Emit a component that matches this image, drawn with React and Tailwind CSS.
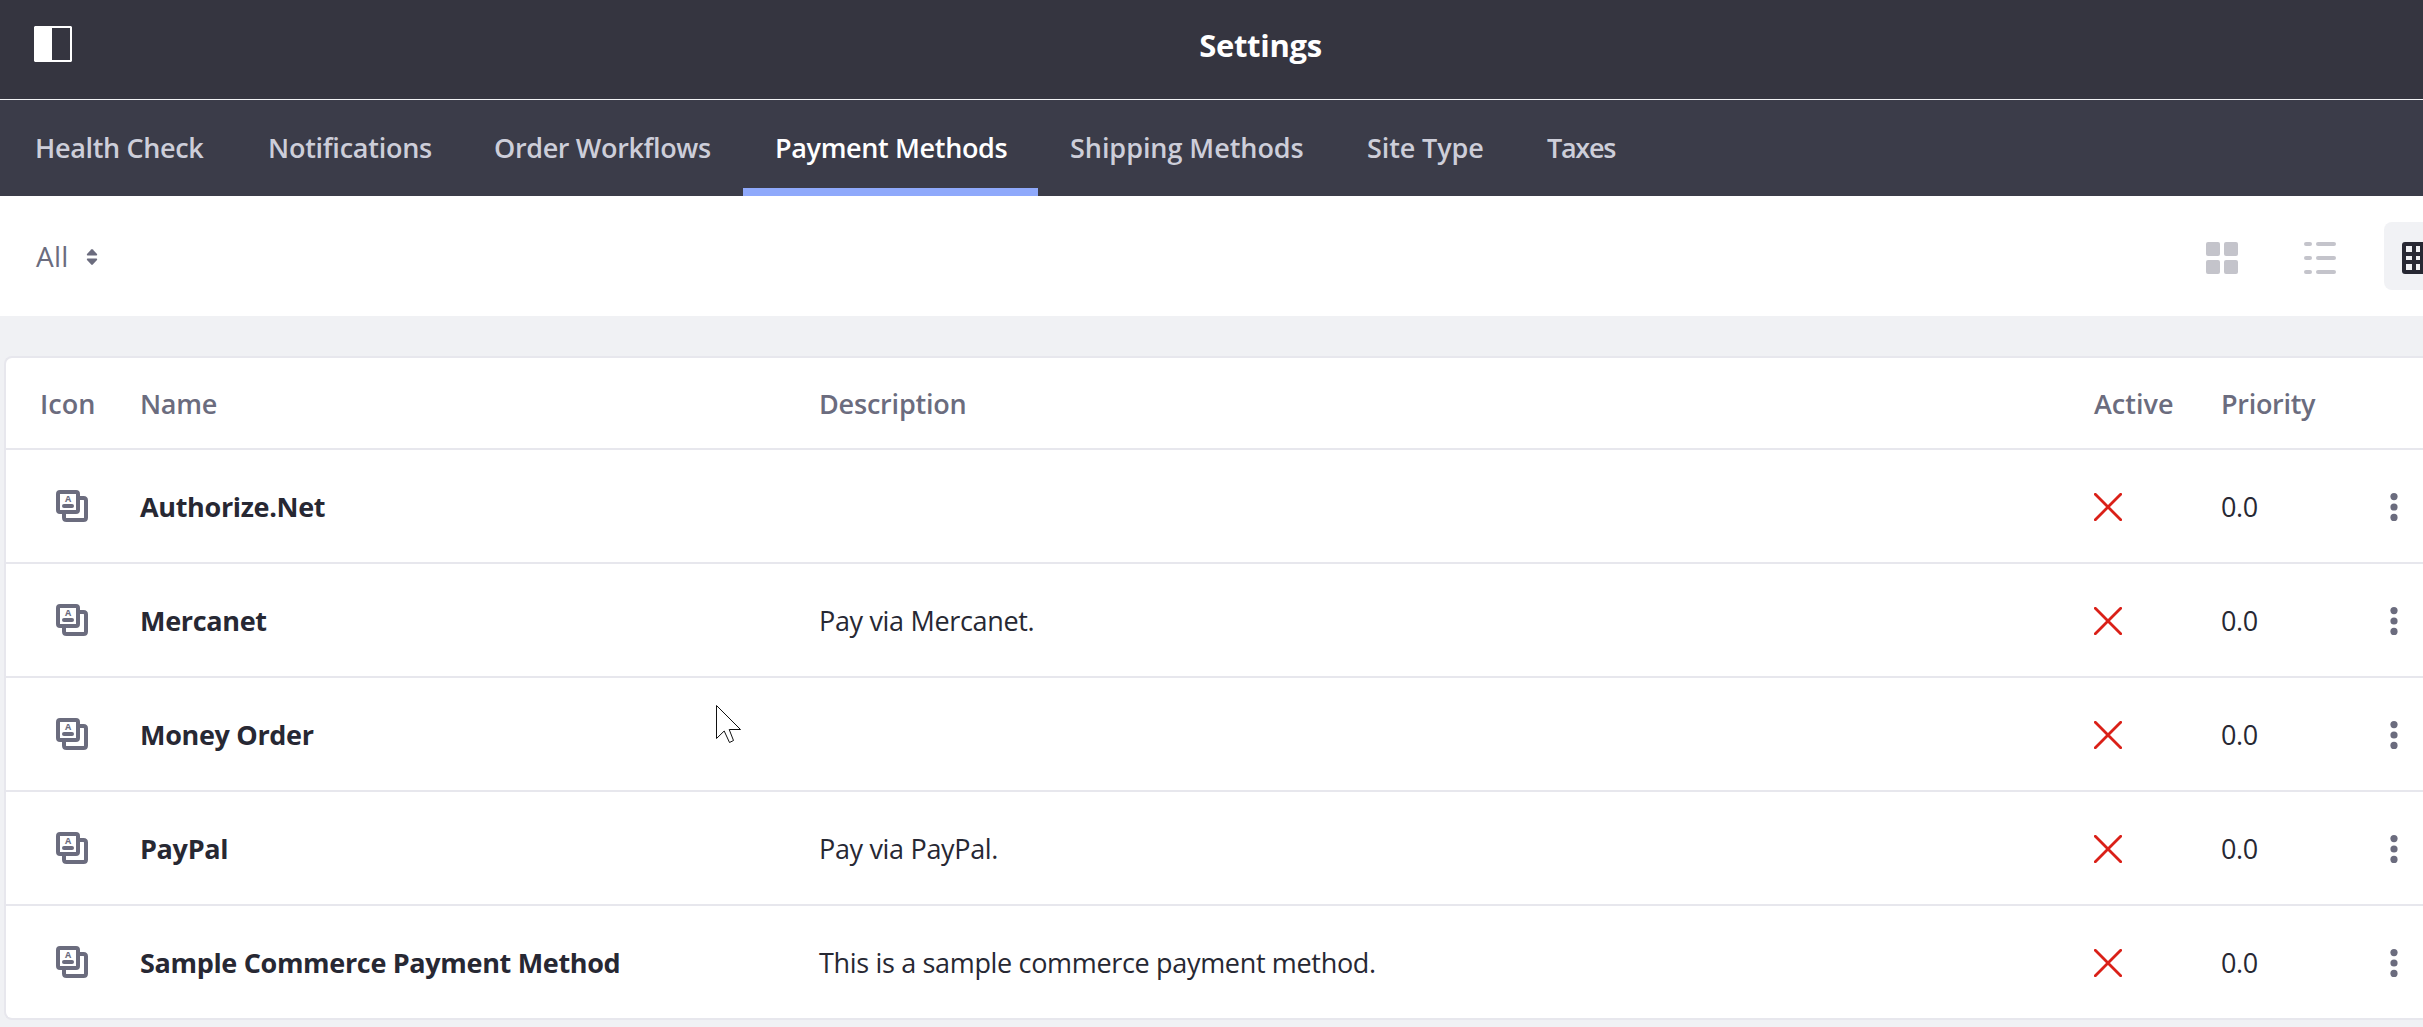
import React from "react";

const tabs = [
  { label: "Health Check", className: "w-[233px] tracking-[-0.35px] text-[#cdced9]" },
  { label: "Notifications", className: "w-[226px] tracking-[-0.25px] text-[#cdced9]" },
  { label: "Order Workflows", className: "w-[281px] tracking-[-0.35px] text-[#cdced9]" },
  { label: "Payment Methods", className: "w-[295px] tracking-[-0.35px] text-white", active: true },
  { label: "Shipping Methods", className: "w-[297px] tracking-[-0.05px] text-[#cdced9]" },
  { label: "Site Type", className: "w-[180px] tracking-[-0.1px] text-[#cdced9]" },
  { label: "Taxes", className: "w-[136px] tracking-[-1.3px] text-[#cdced9]" },
];

const methods = [
  { name: "Authorize.Net", description: "" },
  { name: "Mercanet", description: "Pay via Mercanet." },
  { name: "Money Order", description: "" },
  { name: "PayPal", description: "Pay via PayPal." },
  { name: "Sample Commerce Payment Method", description: "This is a sample commerce payment method." },
];

const columns = "grid grid-cols-[134px_679px_1275px_127px_169px_1fr] items-center";

function SidebarIcon() {
  return (
    <svg width="38" height="36" viewBox="0 0 38 36" className="shrink-0">
      <path fillRule="evenodd" fill="#fff" d="M1 0H37L38 1V35L37 36H1L0 35V1ZM18 2V34H36V2Z" />
    </svg>
  );
}

function CaretIcon() {
  return (
    <svg width="12" height="16" viewBox="0 0 12 16" fill="#6b6c7e">
      <path d="M5.2 .5Q6 -.3 6.8 .5L11 5Q11.6 6.4 10.4 6.5H1.6Q.4 6.4 1 5Z" />
      <path d="M5.2 15.5Q6 16.3 6.8 15.5L11 11Q11.6 9.6 10.4 9.5H1.6Q.4 9.6 1 11Z" />
    </svg>
  );
}

function CardsIcon() {
  return (
    <svg width="32" height="32" viewBox="0 0 32 32" fill="#c4c4cb">
      <rect width="14" height="14" rx="2" />
      <rect x="18" width="14" height="14" rx="2" />
      <rect y="18" width="14" height="14" rx="2" />
      <rect x="18" y="18" width="14" height="14" rx="2" />
    </svg>
  );
}

function ListIcon() {
  return (
    <svg width="32" height="32" viewBox="0 0 32 32" fill="#c4c4cb">
      {[0, 14, 28].map((y) => (
        <g key={y}>
          <rect y={y} width="8" height="4" rx="2" />
          <rect x="12" y={y} width="20" height="4" rx="2" />
        </g>
      ))}
    </svg>
  );
}

function TableIcon() {
  return (
    <svg width="32" height="32" viewBox="0 0 32 32" className="shrink-0">
      <rect width="32" height="32" rx="3" fill="#272833" />
      {[[4, 6], [14, 4], [22, 6]].map(([y, h]) => (
        <g key={y} fill="#f1f2f5">
          <rect x="4" y={y} width="6" height={h} />
          <rect x="14" y={y} width="4" height={h} />
          <rect x="22" y={y} width="6" height={h} />
        </g>
      ))}
    </svg>
  );
}

function MethodIcon() {
  return (
    <svg width="32" height="32" viewBox="0 0 32 32" fill="none">
      <path d="M8 23V27.5Q8 30 10.5 30H27.5Q30 30 30 27.5V10.5Q30 8 27.5 8H23" stroke="#6b6c7e" strokeWidth="4" />
      <rect x="2" y="2" width="20" height="20" rx="2" stroke="#6b6c7e" strokeWidth="4" />
      <rect x="6" y="14" width="12" height="4" rx="2" fill="#6b6c7e" />
      <text x="12" y="12.2" textAnchor="middle" fill="#6b6c7e" className="font-['Open_Sans',sans-serif] text-[9px] font-bold tracking-normal">A</text>
    </svg>
  );
}

function CrossIcon() {
  return (
    <svg width="28" height="28" viewBox="0 0 28 28" className="mt-[2px]">
      <path d="M1.3 1.3L26.7 26.7M26.7 1.3L1.3 26.7" stroke="#da2018" strokeWidth="2.8" strokeLinecap="round" />
    </svg>
  );
}

function MenuIcon() {
  return (
    <svg width="8" height="28" viewBox="0 0 8 28" fill="#6b6c7e" className="mt-[2px]">
      <circle cx="4" cy="3.6" r="3.6" />
      <circle cx="4" cy="14" r="3.6" />
      <circle cx="4" cy="24.4" r="3.6" />
    </svg>
  );
}

export default function App() {
  return (
    <div className="relative h-[1027px] w-full overflow-hidden bg-[#f0f1f4] font-['Open_Sans',sans-serif] text-[27px] leading-[40px] whitespace-nowrap">
      <header className="flex h-[100px] items-center border-b border-[#f1f2f5] bg-[#353540] pb-[11px] pl-[34px]">
        <SidebarIcon />
        <h1 className="flex-1 pt-[2px] pl-[26px] text-center text-[31px] font-bold tracking-[-0.3px] text-white">Settings</h1>
      </header>

      <nav className="flex h-[96px] bg-[#3b3c49] pl-[3px] font-semibold">
        {tabs.map((tab) => (
          <a
            key={tab.label}
            className={`${tab.className} flex items-center border-b-8 pt-[7px] pl-8 ${tab.active ? "border-[#8fa9fb]" : "border-transparent"}`}
          >
            {tab.label}
          </a>
        ))}
      </nav>

      <div className="flex h-[120px] items-center justify-between bg-white pl-[36px]">
        <div className="flex items-center gap-[17px] text-[28px] text-[#6b6c7e]">
          <span className="tracking-[0.3px]">All</span>
          <div className="pt-[2px]">
            <CaretIcon />
          </div>
        </div>
        <div className="flex w-[217px] items-center">
          <div className="mr-[66px] pt-1">
            <CardsIcon />
          </div>
          <div className="mr-[48px] pt-1">
            <ListIcon />
          </div>
          <div className="flex h-[68px] w-[39px] shrink-0 items-center overflow-hidden rounded-l-lg bg-[#f1f2f5] pt-1 pl-[18px]">
            <TableIcon />
          </div>
        </div>
      </div>

      <div className="mt-[40px] ml-[4px] h-[664px] overflow-hidden rounded-l-lg border-2 border-r-0 border-[#e7e7ed] bg-white text-[#272833]">
        <div className={`${columns} h-[90px] font-semibold text-[#6b6c7e]`}>
          <span className="pt-px pl-[34px]">Icon</span>
          <span className="pt-px tracking-[-0.3px]">Name</span>
          <span className="pt-px tracking-[-0.2px]">Description</span>
          <span className="pt-px">Active</span>
          <span className="pt-px tracking-[-0.3px]">Priority</span>
        </div>
        {methods.map((method) => (
          <div key={method.name} className={`${columns} h-[114px] border-t-2 border-[#e7e7ed] tracking-[-0.33px]`}>
            <span className="pl-[50px]">
              <MethodIcon />
            </span>
            <span className="pt-px font-bold">{method.name}</span>
            <span className="pt-px">{method.description}</span>
            <CrossIcon />
            <span className="pt-px">0.0</span>
            <MenuIcon />
          </div>
        ))}
      </div>

      <svg width="26" height="40" viewBox="0 0 26 40" className="absolute top-[705px] left-[716px]">
        <path d="M.5 .5L24.5 24.5H13.2L17.5 35.5L13.5 37.5L8.2 26L.5 33.5Z" fill="#fff" stroke="#111" strokeWidth="1" />
      </svg>
    </div>
  );
}
